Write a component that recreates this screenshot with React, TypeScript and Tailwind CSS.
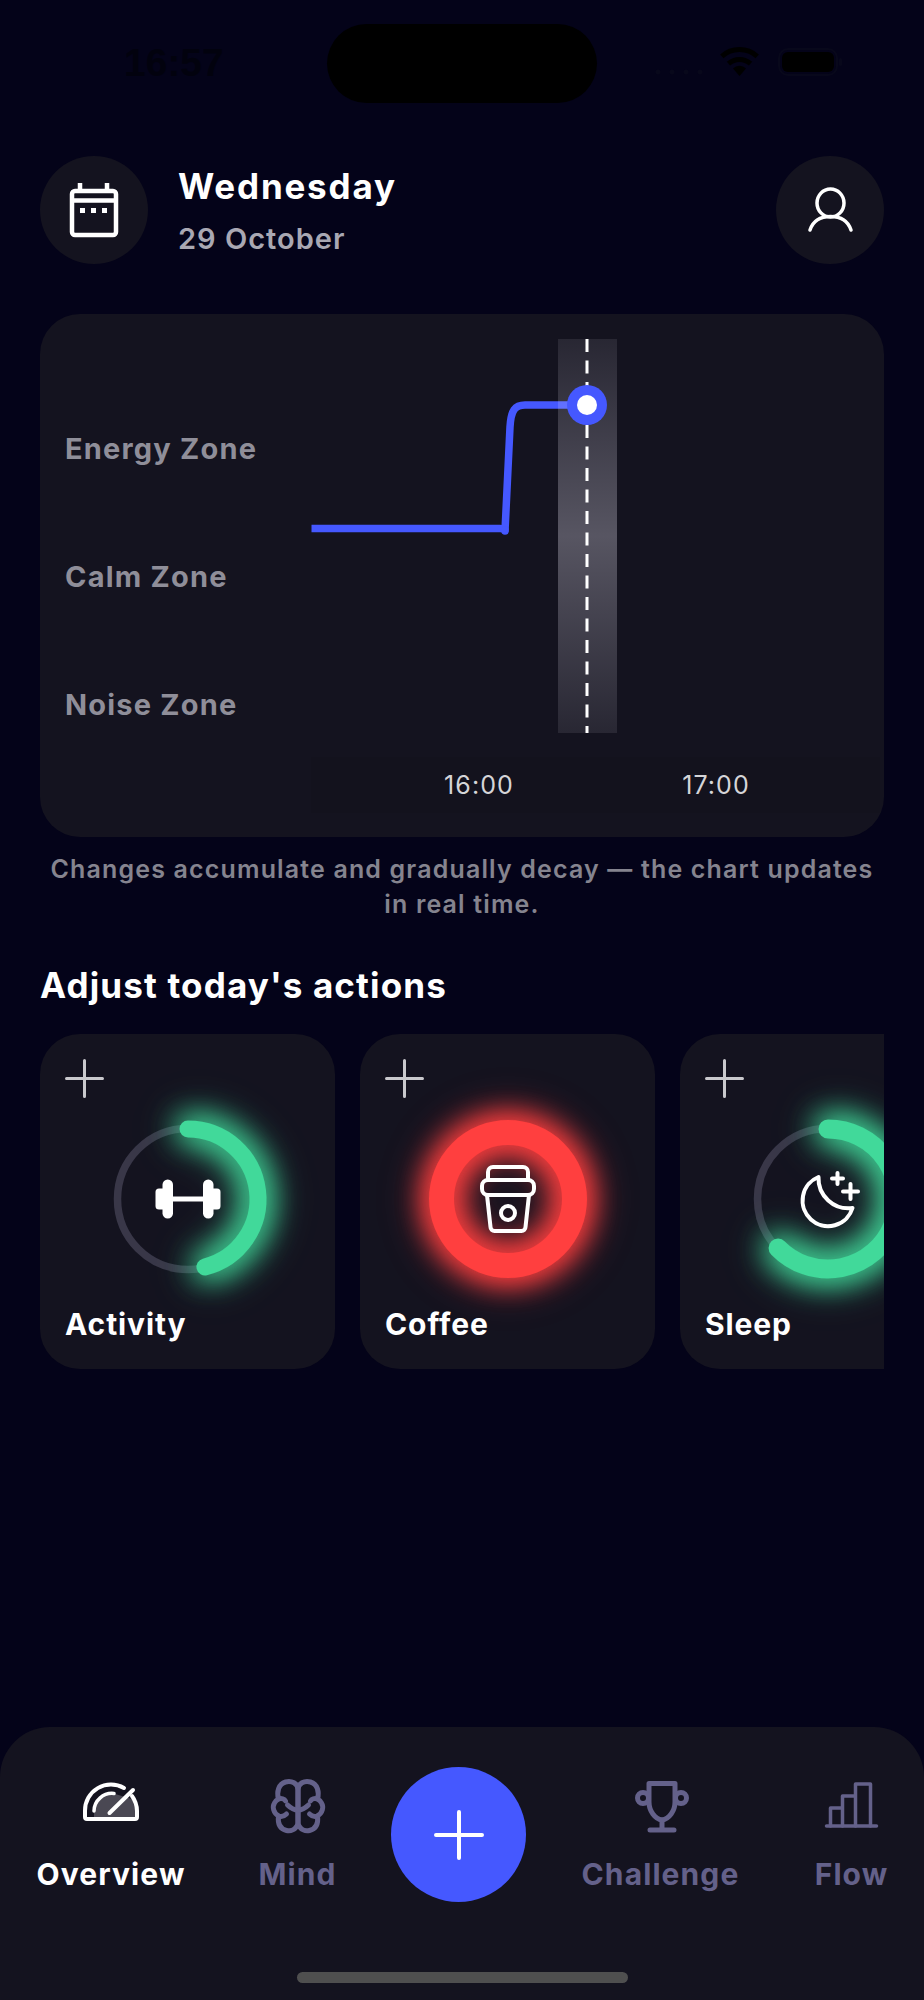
import React from "react";

function polar(r: number, deg: number) {
  const a = ((deg - 90) * Math.PI) / 180;
  return [r * Math.cos(a), r * Math.sin(a)];
}
function arc(r: number, end: number) {
  const [x, y] = polar(r, end);
  return `M0 ${-r} A${r} ${r} 0 ${end > 180 ? 1 : 0} 1 ${x.toFixed(2)} ${y.toFixed(2)}`;
}

function Plus() {
  return (
    <svg width="39" height="39" viewBox="0 0 39 39" fill="none" stroke="#c9c9cd" strokeWidth="3" strokeLinecap="round">
      <path d="M19.5 1.5V37.5M1.5 19.5H37.5" />
    </svg>
  );
}

function Dumbbell() {
  return (
    <g fill="#fff">
      <rect x="-15" y="-2.5" width="30" height="5" />
      <rect x="-32.5" y="-10.5" width="12" height="21" rx="3.5" />
      <rect x="-25.5" y="-19.5" width="10.5" height="39" rx="5.2" />
      <rect x="20.5" y="-10.5" width="12" height="21" rx="3.5" />
      <rect x="15" y="-19.5" width="10.5" height="39" rx="5.2" />
    </g>
  );
}
function Cup() {
  return (
    <g fill="none" stroke="#fff" strokeWidth="4" strokeLinejoin="round" strokeLinecap="round">
      <path d="M-20 -19V-27a5 5 0 0 1 5-5H15a5 5 0 0 1 5 5V-19" />
      <rect x="-26" y="-19" width="52" height="15" rx="6" />
      <path d="M-21 -4L-17.5 28a4 4 0 0 0 4 4H13.5a4 4 0 0 0 4-4L21 -4" />
      <circle cx="0" cy="14" r="7" />
    </g>
  );
}
function Moon() {
  return (
    <g fill="none" stroke="#fff" strokeWidth="4" strokeLinejoin="round" strokeLinecap="round">
      <path d="M-9.5 -22A25.5 25.5 0 1 0 24.5 9A30 30 0 0 1 -9.5 -22Z" />
      <path d="M9.5 -26V-15M4 -20.5H15" />
      <path d="M22.5 -15V0M15 -7.5H30" />
    </g>
  );
}

function Ring({ kind }: { kind: "activity" | "coffee" | "sleep" }) {
  return (
    <svg width="160" height="160" viewBox="-80 -80 160 160" fill="none" className="overflow-visible">
      {kind === "coffee" ? (
        <circle
          r="66.5"
          stroke="#ff3f3f"
          strokeWidth="25"
          className="[filter:drop-shadow(0_0_15px_#ff3f3f)_drop-shadow(0_0_15px_#ff3f3f)]"
        />
      ) : (
        <>
          <circle r="70.5" stroke="#393748" strokeWidth="7.5" />
          <path
            d={arc(70, kind === "activity" ? 166 : 225.5)}
            stroke="#41d99a"
            strokeWidth={kind === "activity" ? 17 : 19}
            strokeLinecap="round"
            className="[filter:drop-shadow(0_0_15px_#41d99a)_drop-shadow(0_0_15px_#41d99a)]"
          />
        </>
      )}
      {kind === "activity" && <Dumbbell />}
      {kind === "coffee" && <Cup />}
      {kind === "sleep" && <Moon />}
    </svg>
  );
}

function ActionCard({ kind, label }: { kind: "activity" | "coffee" | "sleep"; label: string }) {
  return (
    <div className="flex h-[335px] w-[295px] shrink-0 flex-col rounded-[40px] bg-[#14131f] pt-[25px]">
      <div className="pl-[25px]">
        <Plus />
      </div>
      <div className="mt-[21px] flex justify-center">
        <Ring kind={kind} />
      </div>
      <div className="relative mt-[23px] pl-[25px] text-[30px] leading-[44px] font-bold tracking-[0.9px] text-white">{label}</div>
    </div>
  );
}

function NavIcon({ children }: { children: React.ReactNode }) {
  return (
    <svg width="80" height="70" viewBox="0 0 80 70" fill="none" stroke="#64618a" strokeLinecap="round" strokeLinejoin="round">
      {children}
    </svg>
  );
}

function NavItem({ label, w, active, children }: { label: string; w: string; active?: boolean; children: React.ReactNode }) {
  return (
    <div className={`${w} mt-[3px] flex shrink-0 flex-col items-center`}>
      {children}
      <div className={`mt-[12px] text-[30px] leading-[44px] font-bold tracking-[1.1px] whitespace-nowrap ${active ? "text-white" : "text-[#64618a]"}`}>{label}</div>
    </div>
  );
}

export default function App() {
  const half = (
    <>
      <path d="M38.5 54C36 60 31 61.5 27 60.5C21 59 18 54 19 46C14 43 12.5 37 15 33C16 31 17 30 19 29C17 22 19 14 26 12C32 10.5 38.5 13 38.5 20V54" />
      <path d="M38.5 40C34 40 31 38 28 35" />
      <path d="M19 29C22 28 25 29 26 31" />
      <path d="M19 46C22 47 25 46 27 44" />
    </>
  );
  return (
    <div className="flex h-[2000px] w-[924px] flex-col overflow-hidden bg-[#040319] font-[Inter,sans-serif]">
      {/* status bar */}
      <div className="mt-[24px] flex h-[79px] items-center pl-[124px]">
        <div className="w-[203px] font-['Liberation_Sans',sans-serif] text-[39px] font-bold text-[#02020e]">16:57</div>
        <div className="h-[79px] w-[270px] rounded-[40px] bg-black" />
        <svg className="ml-[58px]" width="190" height="49" viewBox="655 39 190 49" fill="none">
          <g fill="#08081b">
            <circle cx="658" cy="72" r="2.5" />
            <circle cx="672" cy="72" r="2.5" />
            <circle cx="686" cy="72" r="2.5" />
            <circle cx="700" cy="72" r="2.5" />
          </g>
          <g stroke="#000" strokeWidth="5">
            <path d="M721.8 56.3A26.5 26.5 0 0 1 757.2 56.3" />
            <path d="M728.5 63.7A16.5 16.5 0 0 1 750.5 63.7" />
          </g>
          <path d="M739.5 76L733 68.5A9 9 0 0 1 746 68.5Z" fill="#000" />
          <rect x="779" y="49" width="58" height="26" rx="9" stroke="#08081b" strokeWidth="2" />
          <rect x="782" y="52" width="52" height="20" rx="6" fill="#000" />
          <rect x="839" y="58" width="3" height="8" rx="1.5" fill="#08081b" />
        </svg>
      </div>

      {/* header */}
      <div className="mt-[53px] flex items-center px-[40px]">
        <div className="flex h-[108px] w-[108px] items-center justify-center rounded-full bg-[#14131f]">
          <svg width="60" height="64" viewBox="64 178 60 64" fill="none" stroke="#fff" strokeWidth="4.5">
            <rect x="72" y="191" width="44" height="44" rx="3" />
            <path d="M80 183V191M107 183V191M72 200.5H116" />
            <g fill="#fff" stroke="none">
              <rect x="80" y="208" width="5" height="5" />
              <rect x="91" y="208" width="5" height="5" />
              <rect x="102" y="208" width="5" height="5" />
            </g>
          </svg>
        </div>
        <div className="ml-[30px] pt-[2px]">
          <div className="text-[35px] leading-[44px] font-bold tracking-[1.8px] text-white">Wednesday</div>
          <div className="mt-[11px] text-[29px] leading-[40px] font-semibold tracking-[1px] text-[#a9a8b3]">29 October</div>
        </div>
        <div className="ml-auto flex h-[108px] w-[108px] items-center justify-center rounded-full bg-[#14131f]">
          <svg width="60" height="60" viewBox="800 180 60 60" fill="none" stroke="#fff" strokeWidth="3.5" strokeLinecap="round">
            <ellipse cx="830.5" cy="203" rx="13.5" ry="14" />
            <path d="M810 230C813 221 820 216.5 830.5 216.5C841 216.5 848 221 851 230" />
          </svg>
        </div>
      </div>

      {/* chart card */}
      <div className="mx-[40px] mt-[50px] flex h-[523px] rounded-[40px] bg-[#14131f]">
        <div className="w-[271px] shrink-0 pt-[71px] pl-[25px] text-[29px] font-bold tracking-[1.2px] text-[#8f8e99]">
          <div className="flex h-[128px] items-center">Energy Zone</div>
          <div className="flex h-[128px] items-center">Calm Zone</div>
          <div className="flex h-[128px] items-center">Noise Zone</div>
        </div>
        <div className="flex-1 pt-[25px]">
          <svg width="573" height="394" viewBox="311 339 573 394" fill="none" className="block overflow-visible">
            <defs>
              <linearGradient id="band" x1="0" y1="0" x2="0" y2="1">
                <stop offset="0" stopColor="#f4f0ff" stopOpacity="0.09" />
                <stop offset="0.5" stopColor="#f4f0ff" stopOpacity="0.3" />
                <stop offset="1" stopColor="#f4f0ff" stopOpacity="0.09" />
              </linearGradient>
            </defs>
            <path
              d="M311.5 528.5H500Q505 528.5 505 531L510 427C511 410 515 405 525 405H570"
              stroke="#4558ff"
              strokeWidth="7.5"
              strokeLinejoin="round"
            />
            <circle cx="505" cy="530" r="3.75" fill="#4558ff" />
            <rect x="558" y="339" width="59" height="394" fill="url(#band)" />
            <path d="M587 339V733" stroke="#fff" strokeWidth="3" strokeDasharray="13 8.5" />
            <circle cx="587" cy="405" r="20" fill="#4558ff" />
            <circle cx="587" cy="405" r="10" fill="#fff" />
          </svg>
          <div className="mt-[24px] mr-[4px] flex h-[56px] items-center bg-[#13121d] pt-[2px] text-[25px] tracking-[1.1px] text-[#d5d5d8]">
            <div className="ml-[118px] w-[100px] text-center">16:00</div>
            <div className="ml-[137px] w-[100px] text-center">17:00</div>
          </div>
        </div>
      </div>

      <p className="mt-[15px] text-center text-[25px] leading-[35px] font-semibold tracking-[1.15px] text-[#85848f]">
        Changes accumulate and gradually decay — the chart updates
        <br />
        in real time.
      </p>

      <h2 className="mt-[41px] pl-[40px] text-[35px] leading-[44px] font-bold tracking-[1.15px] text-white">Adjust today's actions</h2>

      <div className="mt-[27px] ml-[40px] flex w-[844px] gap-[25px] overflow-hidden">
        <ActionCard kind="activity" label="Activity" />
        <ActionCard kind="coffee" label="Coffee" />
        <ActionCard kind="sleep" label="Sleep" />
      </div>

      {/* bottom nav */}
      <div className="mt-auto h-[273px] rounded-t-[50px] bg-[#14131f] pt-[40px]">
        <div className="flex items-start pl-[38px]">
          <NavItem label="Overview" w="w-[146px]" active>
            <svg width="80" height="70" viewBox="1 0 80 70" fill="none" stroke="#fff" strokeLinecap="round" strokeLinejoin="round">
              <path d="M24 49V41A18 18 0 0 1 42 23L65 30V49Z" fill="#4a4853" stroke="none" />
              <path d="M54 18A26 26 0 0 0 15 41V47a2 2 0 0 0 2 2H65a2 2 0 0 0 2-2V41A26 26 0 0 0 62 26" strokeWidth="4" />
              <path d="M24 41A18 18 0 0 1 44 23.5" strokeWidth="3.5" />
              <path d="M39.5 43L63 20" strokeWidth="4" />
            </svg>
          </NavItem>
          <div className="ml-[76px]">
            <NavItem label="Mind" w="w-[75px]">
              <NavIcon>
                <g strokeWidth="5" transform="translate(1.5 0)">
                  {half}
                  <g transform="translate(77 0) scale(-1 1)">{half}</g>
                </g>
              </NavIcon>
            </NavItem>
          </div>
          <div className="ml-[56px] flex h-[135px] w-[135px] shrink-0 items-center justify-center rounded-full bg-[#4558ff]">
            <svg width="50" height="50" viewBox="0 0 50 50" stroke="#fff" strokeWidth="4" strokeLinecap="round">
              <path d="M25 2V48M2 25H48" />
            </svg>
          </div>
          <div className="ml-[55px]">
            <NavItem label="Challenge" w="w-[159px]">
              <NavIcon>
                <g strokeWidth="5">
                  <path d="M28 13.5H54V32C54 41 48 49 41 50C34 49 28 41 28 32Z" />
                  <circle cx="22" cy="28" r="5.5" />
                  <circle cx="60" cy="28" r="5.5" />
                  <path d="M41 50V60M29 60H53" />
                </g>
              </NavIcon>
            </NavItem>
          </div>
          <div className="ml-[76px]">
            <NavItem label="Flow" w="w-[71px]">
              <NavIcon>
                <g strokeWidth="3.5" transform="translate(-1.5 0)">
                  <path d="M16 56H66" />
                  <path d="M20 56V38H32V56M32 38V26H45V56M45 26V14H60V56" />
                </g>
              </NavIcon>
            </NavItem>
          </div>
        </div>
        <div className="mx-auto mt-[70px] h-[11px] w-[331px] rounded-full bg-[#4f4f4f]" />
      </div>
    </div>
  );
}
